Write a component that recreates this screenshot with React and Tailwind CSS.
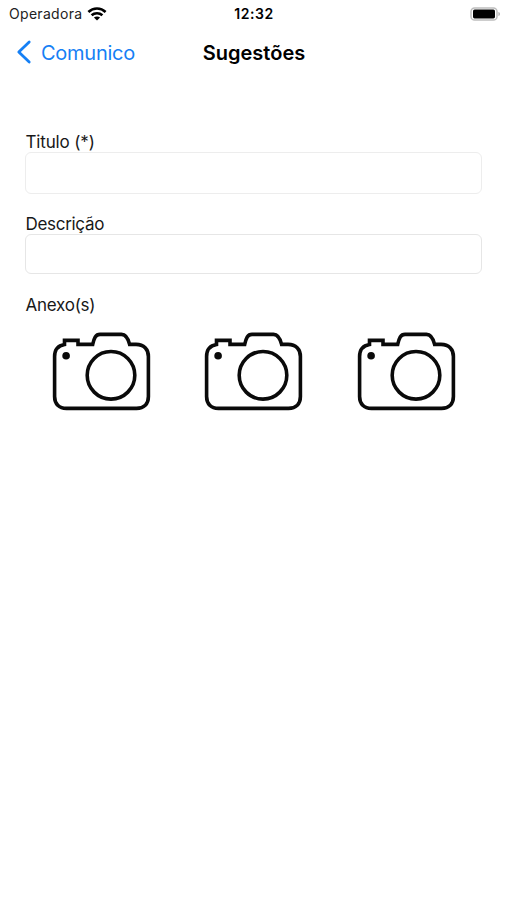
import React from "react";

// Campos de texto do formulário
const FIELDS = [
  { id: "titulo", label: "Titulo (*)", labelClass: "tracking-[-0.15px]", box: "h-[42px] border-[#ededed]" },
  { id: "descricao", label: "Descrição", labelClass: "tracking-[-0.3px]", box: "h-[40px] border-[#e6e6e6]" },
];

const ATTACHMENTS = [1, 2, 3];

function WifiIcon() {
  return (
    <svg width="20" height="15" viewBox="0 0 20 15" fill="none" stroke="#000" strokeWidth="2.6">
      <path d="M1.4 5C6.2 .4 13.8 .4 18.6 5" />
      <path d="M4.6 8.3C7.7 5.5 12.3 5.5 15.4 8.3" />
      <path d="M10 13.5 6.9 10.6C8.7 9 11.3 9 13.1 10.6Z" fill="#000" stroke="none" />
    </svg>
  );
}

function BatteryIcon() {
  return (
    <svg width="31" height="15" viewBox="0 0 31 15">
      <rect x="1" y="1" width="26" height="12" rx="3.6" fill="#fff" stroke="#bdbdbd" strokeWidth="1.5" />
      <rect x="3" y="2.6" width="22" height="8.8" rx="1.6" fill="#000" />
      <path d="M28.4 5C30.6 5.8 30.6 8.2 28.4 9Z" fill="#b5b5b5" />
    </svg>
  );
}

function CameraIcon() {
  return (
    <svg width="100" height="80" viewBox="0 0 100 80" fill="none" stroke="#0a0a0a" strokeWidth="3.6">
      <path d="M12.5 12.4V8.4H26V12.4H40.7C42.2 6 43.5 2.4 48 2.4H69.5C74 2.4 76 6 77.6 12.4H84C92 12.4 96.4 17.5 96.4 24.5V64.5C96.4 72 92 76.4 84.5 76.4H14.5C7 76.4 2.6 72 2.6 64.5V24.5C2.6 18 6 13.5 12.5 12.4Z" />
      <circle cx="59" cy="43.3" r="23.8" />
      <circle cx="14.1" cy="23.8" r="3.8" fill="#0a0a0a" stroke="none" />
    </svg>
  );
}

export default function App() {
  return (
    <div className="min-h-screen bg-white font-['Inter',sans-serif] text-black">
      {/* Barra de status */}
      <div className="grid h-7 grid-cols-3 items-center pl-[9px] pr-[6px]">
        <div className="flex items-center gap-[5px]">
          <span className="text-[14px] leading-7 tracking-[0.3px] text-[#222]">Operadora</span>
          <WifiIcon />
        </div>
        <span className="pr-[2px] text-center text-[14px] font-semibold leading-7 tracking-[0.55px]">12:32</span>
        <div className="flex justify-end">
          <BatteryIcon />
        </div>
      </div>

      {/* Navegação */}
      <div className="grid h-12 grid-cols-3 items-center">
        <button className="flex items-center gap-[9px] pl-4 text-[#1680f5]">
          <svg width="16" height="24" viewBox="0 0 16 24" fill="none" stroke="currentColor" strokeWidth="2.8" strokeLinecap="round" strokeLinejoin="round">
            <path d="M13.2 2 2.8 12 13.2 22" />
          </svg>
          <span className="pt-px text-[20px] tracking-[-0.25px]">Comunico</span>
        </button>
        <h1 className="pl-px pt-px text-center text-[20px] font-semibold">Sugestões</h1>
      </div>

      {/* Formulário */}
      <form className="px-[25px] pt-[56px]">
        {FIELDS.map((f) => (
          <div key={f.id} className="mb-5">
            <label htmlFor={f.id} className={`block h-5 pl-[0.5px] text-[17px] leading-5 text-[#181818] ${f.labelClass}`}>
              {f.label}
            </label>
            <input id={f.id} className={`block w-full rounded-[6px] border bg-white px-2 outline-none ${f.box}`} />
          </div>
        ))}

        <p className="h-5 pl-[0.5px] pt-px text-[17px] leading-5 tracking-[-0.25px] text-[#181818]">Anexo(s)</p>
        <div className="mt-[18px] grid grid-cols-3 pl-px -mr-px">
          {ATTACHMENTS.map((n) => (
            <button key={n} type="button" className="flex justify-center">
              <CameraIcon />
            </button>
          ))}
        </div>
      </form>
    </div>
  );
}
